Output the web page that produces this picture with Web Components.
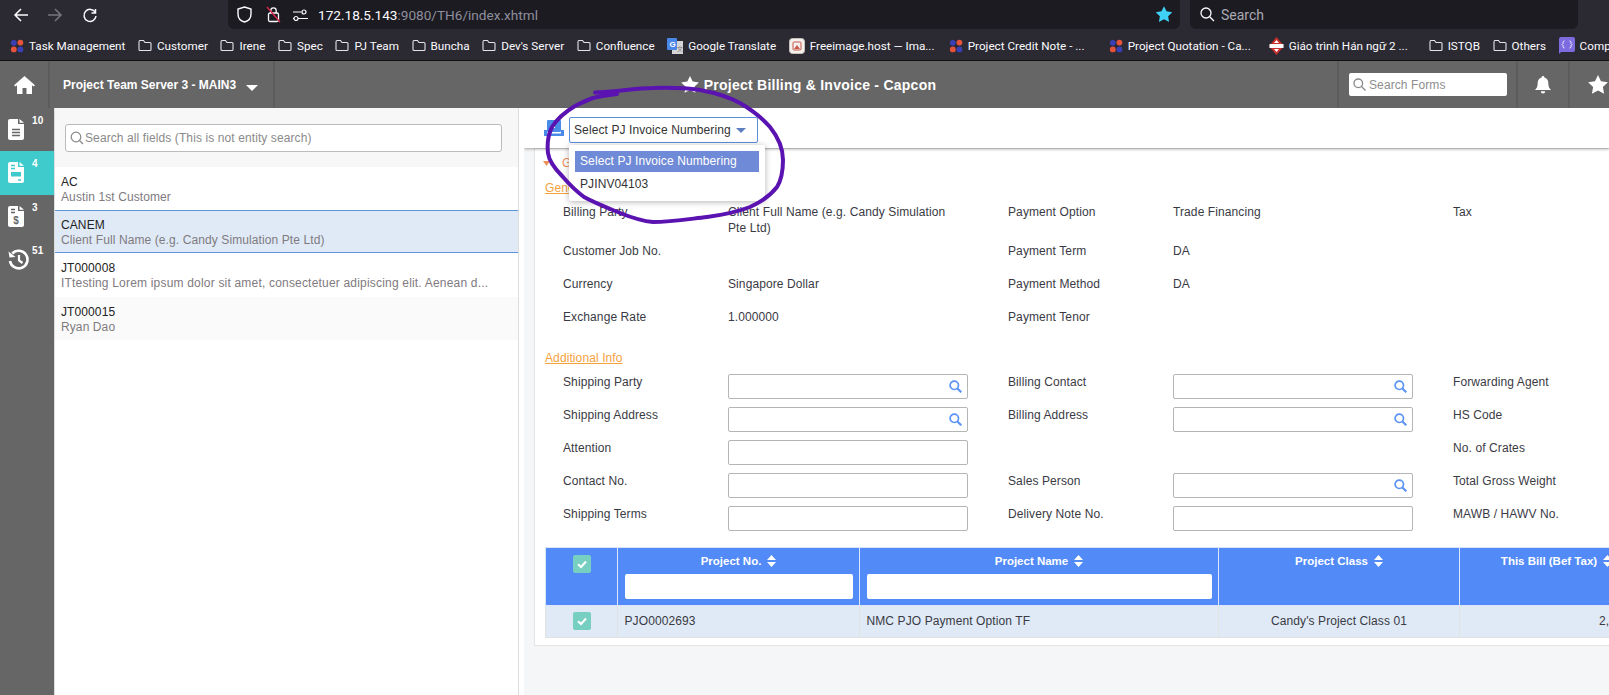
<!DOCTYPE html>
<html>
<head>
<meta charset="utf-8">
<title>Project Billing & Invoice</title>
<style>
  html, body { margin: 0; padding: 0; width: 1609px; height: 695px; overflow: hidden; background: #f4f6f8; }
  body { font-family: "Liberation Sans", Arial, sans-serif; font-size: 12px; color: #3a3a44; letter-spacing: .1px; }
</style>
</head>
<body>
<browser-bar></browser-bar>
<bookmark-bar>
  <book-mark kind="dots" style="margin-left:10px">Task Management</book-mark>
  <book-mark kind="folder">Customer</book-mark>
  <book-mark kind="folder">Irene</book-mark>
  <book-mark kind="folder">Spec</book-mark>
  <book-mark kind="folder">PJ Team</book-mark>
  <book-mark kind="folder">Buncha</book-mark>
  <book-mark kind="folder">Dev's Server</book-mark>
  <book-mark kind="folder">Confluence</book-mark>
  <book-mark kind="translate">Google Translate</book-mark>
  <book-mark kind="image" style="width:147.4px">Freeimage.host — Ima...</book-mark>
  <book-mark kind="dots" style="width:147.4px">Project Credit Note - ...</book-mark>
  <book-mark kind="dots" style="width:147.4px">Project Quotation - Ca...</book-mark>
  <book-mark kind="site" style="width:147.4px">Giáo trình Hán ngữ 2 ...</book-mark>
  <book-mark kind="folder">ISTQB</book-mark>
  <book-mark kind="folder">Others</book-mark>
  <book-mark kind="chat">Comp</book-mark>
</bookmark-bar>
<app-header></app-header>
<app-body>
  <side-rail slot="rail">
    <rail-item icon="doc" badge="10"></rail-item>
    <rail-item icon="form" badge="4" active></rail-item>
    <rail-item icon="bill" badge="3"></rail-item>
    <rail-item icon="history" badge="51"></rail-item>
  </side-rail>
  <entity-list slot="list">
    <entity-row code="AC" name="Austin 1st Customer"></entity-row>
    <entity-row code="CANEM" name="Client Full Name (e.g. Candy Simulation Pte Ltd)" selected></entity-row>
    <entity-row code="JT000008" name="ITtesting Lorem ipsum dolor sit amet, consectetuer adipiscing elit. Aenean d..." style="--name-spacing:.19px"></entity-row>
    <entity-row code="JT000015" name="Ryan Dao" shaded></entity-row>
  </entity-list>
  <invoice-toolbar slot="toolbar"></invoice-toolbar>
  <form-card slot="card">
    <section-title>General</section-title>
    <section-link style="margin-top:9px">General Info</section-link>
    <field-grid rows="39px 33px 33px 33px" style="margin-top:8px">
      <field-label>Billing Party</field-label><field-label>Client Full Name (e.g. Candy Simulation Pte Ltd)</field-label>
      <field-label>Payment Option</field-label><field-label>Trade Financing</field-label>
      <field-label>Tax</field-label>
      <field-label>Customer Job No.</field-label><span></span>
      <field-label>Payment Term</field-label><field-label>DA</field-label>
      <span></span>
      <field-label>Currency</field-label><field-label>Singapore Dollar</field-label>
      <field-label>Payment Method</field-label><field-label>DA</field-label>
      <span></span>
      <field-label>Exchange Rate</field-label><field-label>1.000000</field-label>
      <field-label>Payment Tenor</field-label><span></span>
      <span></span>
    </field-grid>
    <section-link style="margin-top:8px">Additional Info</section-link>
    <field-grid rows="33px 33px 33px 33px 33px" style="margin-top:8px">
      <field-label>Shipping Party</field-label><text-box search></text-box>
      <field-label>Billing Contact</field-label><text-box search></text-box>
      <field-label>Forwarding Agent</field-label>
      <field-label>Shipping Address</field-label><text-box search></text-box>
      <field-label>Billing Address</field-label><text-box search></text-box>
      <field-label>HS Code</field-label>
      <field-label>Attention</field-label><text-box></text-box>
      <span></span><span></span>
      <field-label>No. of Crates</field-label>
      <field-label>Contact No.</field-label><text-box></text-box>
      <field-label>Sales Person</field-label><text-box search></text-box>
      <field-label>Total Gross Weight</field-label>
      <field-label>Shipping Terms</field-label><text-box></text-box>
      <field-label>Delivery Note No.</field-label><text-box></text-box>
      <field-label>MAWB / HAWV No.</field-label>
    </field-grid>
    <project-table style="margin-top:8px"></project-table>
  </form-card>
</app-body>
<scribble-mark></scribble-mark>

<script>
const folderIcon = '<svg width="14" height="13" viewBox="0 0 14 13" fill="none" stroke="#e4e4e8" stroke-width="1.1"><path d="M1 3V10.5Q1 11.5 2 11.5H12Q13 11.5 13 10.5V4.5Q13 3.5 12 3.5H7L5.5 1.5H2Q1 1.5 1 3Z"/></svg>';
const dotsIcon = '<svg width="14" height="14" viewBox="0 0 14 14"><circle cx="3.8" cy="3.8" r="2.9" fill="#3b3fb5"/><circle cx="10.4" cy="3.6" r="2.9" fill="#e5533d"/><circle cx="3.8" cy="10.4" r="2.9" fill="#e5533d"/><circle cx="10.4" cy="10.4" r="2.9" fill="#3b3fb5"/></svg>';
const bookmarkIcons = {
  folder: folderIcon,
  dots: dotsIcon,
  translate: '<svg width="16" height="16" viewBox="0 0 16 16"><rect x="5" y="3" width="11" height="13" fill="#d5d5d5"/><rect x="0" y="0" width="10" height="12" rx="1" fill="#4a86e8"/><text x="2.4" y="9" font-size="8" font-weight="700" font-family="Liberation Sans" fill="#fff">G</text><text x="10" y="13" font-size="6" font-family="Noto Sans CJK SC" fill="#777">文</text></svg>',
  image: '<svg width="16" height="16" viewBox="0 0 16 16"><rect x="0.5" y="0.5" width="15" height="15" rx="3" fill="#f4f0ee" stroke="#c9c2bd"/><rect x="4" y="4" width="8" height="8" rx="1" fill="none" stroke="#c9584a"/><path d="M5 11L8 7L11 11Z" fill="#c9584a"/></svg>',
  site: '<svg width="15" height="18" viewBox="0 0 15 18"><path d="M7.5 0L15 9L7.5 18L0 9Z" fill="#c9302c"/><rect x="0.5" y="7" width="14" height="4" fill="#fff"/><path d="M7.5 3L10 6H5ZM7.5 15L5 12H10Z" fill="#fff"/></svg>',
  chat: '<svg width="16" height="17" viewBox="0 0 16 17"><path d="M2 0H14Q16 0 16 2V13Q16 15 14 15H2L0 17V2Q0 0 2 0Z" fill="#7d6be0"/><path d="M5.5 4Q4 4 4 5.5V6.5L3 7.5L4 8.5V9.5Q4 11 5.5 11M10.5 4Q12 4 12 5.5V6.5L13 7.5L12 8.5V9.5Q12 11 10.5 11" fill="none" stroke="#fff" stroke-width=".9"/></svg>'
};

class BrowserBar extends HTMLElement {
  constructor() {
    super();
    this.attachShadow({ mode: 'open' });
    this.shadowRoot.innerHTML = `
      <style>
        :host { display: flex; align-items: stretch; height: 29px; background: #2b2a33; font-family: Roboto, sans-serif; color: #fbfbfe; letter-spacing: 0; }
        .nav { width: 228px; display: flex; align-items: center; }
        .nav svg { display: block; }
        .url { width: 952px; background: #1c1b22; border-radius: 0 0 6px 6px; display: flex; align-items: center; position: relative; }
        .url .host { font-size: 13.6px; }
        .url .path { font-size: 13.6px; color: #8f8f9d; }
        .find { width: 388px; margin-left: 10px; background: #1c1b22; border-radius: 0 0 6px 6px; display: flex; align-items: center; padding-left: 10px; box-sizing: border-box; font-size: 14px; color: #a9a9b2; gap: 6px; }
      </style>
      <div class="nav">
        <svg style="margin-left:13px" width="16" height="16" viewBox="0 0 16 16" fill="none" stroke="#fbfbfe" stroke-width="1.5"><path d="M15 8H2M8 2L2 8L8 14"/></svg>
        <svg style="margin-left:18px" width="16" height="16" viewBox="0 0 16 16" fill="none" stroke="#77767e" stroke-width="1.5"><path d="M1 8H14M8 2L14 8L8 14"/></svg>
        <svg style="margin-left:19px" width="16" height="16" viewBox="0 0 16 16" fill="none" stroke="#fbfbfe" stroke-width="1.5"><path d="M13.5 2V6H9.5M13.3 5.5A6 6 0 1 0 14 9"/></svg>
      </div>
      <div class="url">
        <svg style="margin-left:9px" width="15" height="17" viewBox="0 0 15 17" fill="none" stroke="#fbfbfe" stroke-width="1.4"><path d="M7.5 1L14 3V8C14 12 11 15 7.5 16C4 15 1 12 1 8V3Z"/></svg>
        <svg style="margin-left:14px" width="15" height="17" viewBox="0 0 15 17" fill="none"><rect x="2.5" y="7" width="10" height="8.5" rx="1.5" stroke="#fbfbfe" stroke-width="1.3"/><path d="M4.8 7V4.5A2.7 2.7 0 0 1 10.2 4.5V7" stroke="#fbfbfe" stroke-width="1.3"/><path d="M1 1L14 16" stroke="#e22850" stroke-width="1.3"/></svg>
        <svg style="margin-left:12px" width="15" height="12" viewBox="0 0 15 12" fill="none" stroke="#fbfbfe" stroke-width="1.2"><circle cx="11" cy="3" r="2"/><path d="M0 3H8.5M0 9.5H1M5 9.5H15"/><circle cx="3" cy="9.5" r="2"/></svg>
        <span style="margin-left:10px" class="host">172.18.5.143</span><span class="path">:9080/TH6/index.xhtml</span>
        <svg style="position:absolute;left:927px;top:5px" width="18" height="18" viewBox="0 0 24 24" fill="#3ed0f5"><path d="M12 1.5L15.4 8.4L23 9.5L17.5 14.9L18.8 22.5L12 18.9L5.2 22.5L6.5 14.9L1 9.5L8.6 8.4Z"/></svg>
      </div>
      <div class="find">
        <svg width="15" height="15" viewBox="0 0 15 15" fill="none" stroke="#fbfbfe" stroke-width="1.3"><circle cx="6" cy="6" r="5"/><path d="M9.7 9.7L14 14"/></svg>
        <span>Search</span>
      </div>
    `;
  }
}

class BookmarkBar extends HTMLElement {
  constructor() {
    super();
    this.attachShadow({ mode: 'open' });
    this.shadowRoot.innerHTML = `
      <style>
        :host { display: flex; align-items: center; gap: 12.6px; height: 29px; padding-top: 2px; background: #2b2a33; border-bottom: 1px solid #111; overflow: hidden; font-family: Roboto, sans-serif; font-size: 11.7px; letter-spacing: 0; color: #fbfbfe; }
      </style>
      <slot></slot>
    `;
  }
}

class BookMark extends HTMLElement {
  constructor() {
    super();
    this.attachShadow({ mode: 'open' });
    this.shadowRoot.innerHTML = `
      <style>
        :host { display: inline-flex; flex: none; align-items: center; gap: 5px; white-space: nowrap; }
        svg { display: block; }
      </style>
      <span id="icon"></span><slot></slot>
    `;
  }
  connectedCallback() {
    this.shadowRoot.getElementById('icon').innerHTML = bookmarkIcons[this.getAttribute('kind')] || '';
  }
}

class AppHeader extends HTMLElement {
  constructor() {
    super();
    this.attachShadow({ mode: 'open' });
    this.shadowRoot.innerHTML = `
      <style>
        :host { display: flex; height: 47px; background: #666; color: #fff; position: relative; }
        .cell { display: flex; align-items: center; box-sizing: border-box; border-right: 2px solid #5c5c5c; flex: none; }
        .home { width: 50px; justify-content: center; }
        .server { width: 225px; padding-left: 13px; font-weight: 700; font-size: 12px; letter-spacing: 0; }
        .caret { margin-left: 10px; margin-top: 6px; }
        .title { flex: 1; justify-content: center; font-weight: 700; font-size: 14px; letter-spacing: .25px; gap: 5px; border: 0; padding-left: 5px; }
        .forms { width: 181px; border-left: 2px solid #5c5c5c; padding-left: 10px; }
        .box { width: 158px; height: 23px; background: #fff; border-radius: 2px; display: flex; align-items: center; gap: 3px; padding-left: 4px; box-sizing: border-box; color: #8e8e8e; font-size: 12px; font-weight: 400; }
        .bell { width: 52px; justify-content: center; }
        .star { width: 39px; padding-left: 18px; border: 0; }
      </style>
      <div class="cell home"><svg width="21" height="18" viewBox="0 0 21 18" fill="#fff"><path d="M10.5 0L21 9.3L19.6 10.6L18 9.3V18H12.5V12H8.5V18H3V9.3L1.4 10.6L0 9.3Z"/></svg></div>
      <div class="cell server">Project Team Server 3 - MAIN3
        <svg class="caret" width="12" height="7" viewBox="0 0 12 7" fill="#fff"><path d="M0 1H12L6 7Z"/></svg></div>
      <div class="cell title">
        <svg width="18" height="17" viewBox="0 0 24 23" fill="#fff"><path d="M12 0L15.6 7.6L24 8.7L17.9 14.5L19.4 22.8L12 18.8L4.6 22.8L6.1 14.5L0 8.7L8.4 7.6Z"/></svg>
        <span>Project Billing &amp; Invoice - Capcon</span>
      </div>
      <div class="cell forms"><div class="box">
        <svg width="13" height="13" viewBox="0 0 13 13" fill="none" stroke="#888" stroke-width="1.3"><circle cx="5.3" cy="5.3" r="4.3"/><path d="M8.5 8.5L12.5 12.5"/></svg>
        <span>Search Forms</span></div></div>
      <div class="cell bell"><svg width="16" height="18" viewBox="0 0 16 18" fill="#fff"><path d="M8 0A1.3 1.3 0 0 1 9.3 1.5C12 2 13.3 4.3 13.3 7C13.3 11 14.5 12.5 16 14H0C1.5 12.5 2.7 11 2.7 7C2.7 4.3 4 2 6.7 1.5A1.3 1.3 0 0 1 8 0ZM5.8 15.2H10.2A2.2 2.2 0 0 1 5.8 15.2Z"/></svg></div>
      <div class="cell star"><svg width="20" height="19" viewBox="0 0 24 23" fill="#fff"><path d="M12 0L15.6 7.6L24 8.7L17.9 14.5L19.4 22.8L12 18.8L4.6 22.8L6.1 14.5L0 8.7L8.4 7.6Z"/></svg></div>
    `;
  }
}

class AppBody extends HTMLElement {
  constructor() {
    super();
    this.attachShadow({ mode: 'open' });
    this.shadowRoot.innerHTML = `
      <style>
        :host { display: flex; height: 587px; overflow: hidden; }
        main { flex: 1; min-width: 0; overflow: hidden; position: relative; background: #f4f6f8; border-left: 5px solid #fff; }
      </style>
      <slot name="rail"></slot>
      <slot name="list"></slot>
      <main>
        <slot name="toolbar"></slot>
        <slot name="card"></slot>
      </main>
    `;
  }
}

class SideRail extends HTMLElement {
  constructor() {
    super();
    this.attachShadow({ mode: 'open' });
    this.shadowRoot.innerHTML = `
      <style>
        :host { display: block; width: 54px; flex: none; background: #666; }
      </style>
      <slot></slot>
    `;
  }
}

const railIcons = {
  doc: '<path d="M2 0H10V5H16V19Q16 21 14 21H2Q0 21 0 19V2Q0 0 2 0ZM11.5 0L16 3.8H11.5Z" fill="#fff"/><path d="M4 10.5H12M4 13.5H12M4 16.5H12" stroke="#666" stroke-width="1.4"/>',
  form: '<path d="M2 0H10V5H16V19Q16 21 14 21H2Q0 21 0 19V2Q0 0 2 0ZM11.5 0L16 3.8H11.5Z" fill="#fff"/><path d="M3 3.5H7M3 6.5H7M10 18H13" stroke="#3fcbcb" stroke-width="1.3"/><rect x="3" y="10" width="10" height="4.5" fill="#3fcbcb"/>',
  bill: '<path d="M2 0H10V5H16V19Q16 21 14 21H2Q0 21 0 19V2Q0 0 2 0ZM11.5 0L16 3.8H11.5Z" fill="#fff"/><path d="M3 3.5H7M3 6.5H7" stroke="#666" stroke-width="1.3"/><text x="8" y="18" text-anchor="middle" font-size="10" font-weight="700" font-family="Liberation Sans" fill="#666">$</text>'
};

class RailItem extends HTMLElement {
  constructor() {
    super();
    this.attachShadow({ mode: 'open' });
    this.shadowRoot.innerHTML = `
      <style>
        :host { display: block; height: 43.3px; box-sizing: border-box; padding: 11px 0 0 8px; position: relative; color: #fff; }
        :host([active]) { background: #3fcbcb; }
        svg { display: block; }
        b { position: absolute; left: 32px; top: 7px; font-size: 10px; line-height: 12px; }
      </style>
      <span id="icon"></span><b id="badge"></b>
    `;
  }
  connectedCallback() {
    const name = this.getAttribute('icon');
    this.shadowRoot.getElementById('badge').textContent = this.getAttribute('badge');
    this.shadowRoot.getElementById('icon').innerHTML = name === 'history'
      ? '<svg width="21" height="21" viewBox="0 0 21 21" fill="none" stroke="#fff" stroke-width="2.6"><path d="M4.3 4.5A8.8 8.8 0 1 1 2 12"/><path d="M0.5 2.5L1.5 8.5L7.5 8" fill="#fff" stroke="none"/><path d="M11 6V11.5L14.5 14" stroke-width="2.2"/></svg>'
      : `<svg width="16" height="21" viewBox="0 0 16 21">${railIcons[name]}</svg>`;
  }
}

class EntityList extends HTMLElement {
  constructor() {
    super();
    this.attachShadow({ mode: 'open' });
    this.shadowRoot.innerHTML = `
      <style>
        :host { display: block; width: 465px; flex: none; box-sizing: border-box; background: #fff; border-left: 1px solid #ddd; border-right: 1px solid #ddd; }
        .head { height: 59px; background: #f7f7f7; box-sizing: border-box; padding: 16px 16px 0 10px; }
        .search { height: 28px; background: #fff; border: 1px solid #bbb; border-radius: 3px; box-sizing: border-box; display: flex; align-items: center; gap: 1px; padding-left: 4px; color: #8a8a8a; }
      </style>
      <div class="head"><div class="search">
        <svg width="14" height="14" viewBox="0 0 14 14" fill="none" stroke="#888" stroke-width="1.2"><circle cx="6" cy="6" r="4.8"/><path d="M9.5 9.5L13 13"/></svg>
        <span>Search all fields (This is not entity search)</span>
      </div></div>
      <slot></slot>
    `;
  }
}

class EntityRow extends HTMLElement {
  constructor() {
    super();
    this.attachShadow({ mode: 'open' });
    this.shadowRoot.innerHTML = `
      <style>
        :host { display: block; height: 43.2px; box-sizing: border-box; padding: 8px 6px 0 6px; line-height: 15px; background: #fff; }
        :host([selected]) { background: #dfeaf6; border-top: 1px solid #5f93e0; border-bottom: 1px solid #5f93e0; padding-top: 7px; }
        :host([shaded]) { background: #fafafa; }
        .code { color: #222; }
        .name { color: #807a80; white-space: nowrap; overflow: hidden; letter-spacing: var(--name-spacing, .1px); }
      </style>
      <div class="code"></div><div class="name"></div>
    `;
  }
  connectedCallback() {
    this.shadowRoot.querySelector('.code').textContent = this.getAttribute('code');
    this.shadowRoot.querySelector('.name').textContent = this.getAttribute('name');
  }
}

class InvoiceToolbar extends HTMLElement {
  constructor() {
    super();
    this.attachShadow({ mode: 'open' });
    this.shadowRoot.innerHTML = `
      <style>
        :host { display: flex; align-items: center; height: 40px; background: #fff; padding-left: 20px; position: relative; z-index: 2; box-shadow: 0 1px 3px rgba(0,0,0,.35); }
        .select { width: 189px; height: 26px; margin-left: 5px; margin-top: 4px; box-sizing: border-box; border: 1px solid #5b8fd9; border-radius: 2px; background: #fff; display: flex; align-items: center; justify-content: space-between; padding: 0 11px 0 4px; color: #333; }
        .menu { position: absolute; left: 45px; top: 37px; width: 196px; height: 56px; box-sizing: border-box; background: #fff; box-shadow: 0 1px 6px rgba(0,0,0,.3); border-radius: 2px; padding: 6px; }
        .opt { height: 21px; line-height: 21px; padding-left: 5px; color: #333; }
        .opt.on { background: #6f8ad6; color: #fff; }
        .opt.off { line-height: 24px; }
        svg { display: block; }
      </style>
      <svg width="20" height="16" viewBox="0 0 20 16"><path d="M0 10H3V13.5H17V10H20V16H0Z" fill="#4a8bea"/><rect x="3" y="0" width="14" height="12" rx="1" fill="#4a8bea"/><rect x="9" y="6" width="2" height="2" fill="#fff"/></svg>
      <div class="select"><span>Select PJ Invoice Numbering</span>
        <svg width="10" height="5" viewBox="0 0 10 5" fill="#5d7fbf"><path d="M0 0H10L5 5Z"/></svg></div>
      <div class="menu">
        <div class="opt on">Select PJ Invoice Numbering</div>
        <div class="opt off">PJINV04103</div>
      </div>
    `;
  }
}

class FormCard extends HTMLElement {
  constructor() {
    super();
    this.attachShadow({ mode: 'open' });
    this.shadowRoot.innerHTML = `
      <style>
        :host { display: block; width: 1240px; height: 498px; margin-left: 10px; box-sizing: border-box; background: #fff; border: 1px solid #e4e4e4; padding: 6px 0 0 10px; }
      </style>
      <slot></slot>
    `;
  }
}

class SectionTitle extends HTMLElement {
  constructor() {
    super();
    this.attachShadow({ mode: 'open' });
    this.shadowRoot.innerHTML = `
      <style>
        :host { display: flex; align-items: center; gap: 12px; height: 16px; color: #ee8f5a; font-size: 12px; line-height: 16px; margin-left: -2px; }
      </style>
      <svg width="7" height="5" viewBox="0 0 7 5" fill="#ee8f5a"><path d="M0 0H7L3.5 5Z"/></svg><slot></slot>
    `;
  }
}

class SectionLink extends HTMLElement {
  constructor() {
    super();
    this.attachShadow({ mode: 'open' });
    this.shadowRoot.innerHTML = `
      <style>
        :host { display: block; height: 16px; line-height: 16px; color: #f5a13c; text-decoration: underline; }
      </style>
      <slot></slot>
    `;
  }
}

class FieldGrid extends HTMLElement {
  constructor() {
    super();
    this.attachShadow({ mode: 'open' });
    this.shadowRoot.innerHTML = `
      <style>
        :host { display: grid; grid-template-columns: 165px 280px 165px 280px 1fr; margin-left: 18px; }
      </style>
      <slot></slot>
    `;
  }
  connectedCallback() {
    this.style.gridTemplateRows = this.getAttribute('rows');
  }
}

class FieldLabel extends HTMLElement {
  constructor() {
    super();
    this.attachShadow({ mode: 'open' });
    this.shadowRoot.innerHTML = `
      <style>
        :host { display: block; line-height: 16px; max-width: 232px; color: #3a3a44; }
      </style>
      <slot></slot>
    `;
  }
}

class TextBox extends HTMLElement {
  constructor() {
    super();
    this.attachShadow({ mode: 'open' });
    this.shadowRoot.innerHTML = `
      <style>
        :host { display: flex; align-items: center; justify-content: flex-end; width: 240px; height: 25px; box-sizing: border-box; border: 1px solid #b5b5b5; border-radius: 2px; background: #fff; padding-right: 5px; }
        svg { display: block; }
      </style>
      <span id="icon"></span>
    `;
  }
  connectedCallback() {
    if (this.hasAttribute('search')) {
      this.shadowRoot.getElementById('icon').innerHTML = '<svg width="13" height="13" viewBox="0 0 13 13" fill="none" stroke="#5b93f5" stroke-width="1.7"><circle cx="5.3" cy="5.3" r="4.2"/><path d="M8.4 8.4L12.3 12.3" stroke-width="2.1"/></svg>';
    }
  }
}

class ProjectTable extends HTMLElement {
  constructor() {
    super();
    this.attachShadow({ mode: 'open' });
    const check = '<svg class="check" width="18" height="18" viewBox="0 0 18 18"><rect width="18" height="18" rx="2" fill="#76cfc0"/><path d="M5 9.2L8 12L13 6.5" fill="none" stroke="#fff" stroke-width="2"/></svg>';
    const sort = '<svg class="sort" width="9" height="12" viewBox="0 0 9 12" fill="#fff"><path d="M4.5 0L9 5H0ZM4.5 12L0 7H9Z"/></svg>';
    this.shadowRoot.innerHTML = `
      <style>
        :host { display: block; }
        table { border-collapse: collapse; table-layout: fixed; width: 1108px; font-size: 12px; }
        th, td { border: 1px solid #e2e2e2; box-sizing: border-box; padding: 0 6.5px; vertical-align: top; }
        th { background: #528bf8; color: #fff; height: 58px; text-align: center; font-weight: 700; font-size: 11.5px; letter-spacing: 0; border-color: #dbe6fb; padding-top: 7px; }
        td { background: #dfeaf6; height: 32px; color: #3a3a44; line-height: 30px; }
        .check { display: block; margin: 0 auto; }
        .sort { vertical-align: -2px; margin-left: 6px; }
        input { display: block; width: 100%; height: 25px; box-sizing: border-box; border: 0; border-radius: 2px; background: #fff; margin-top: 7px; }
        .c { text-align: center; }
        .r { text-align: right; }
      </style>
      <table>
        <colgroup><col style="width:72px"><col style="width:242px"><col style="width:359px"><col style="width:241px"><col style="width:194px"></colgroup>
        <tr>
          <th>${check}</th>
          <th>Project No.${sort}<input></th>
          <th>Project Name${sort}<input></th>
          <th>Project Class${sort}</th>
          <th>This Bill (Bef Tax)${sort}</th>
        </tr>
        <tr>
          <td style="padding-top:6px">${check}</td>
          <td>PJO0002693</td>
          <td>NMC PJO Payment Option TF</td>
          <td class="c">Candy's Project Class 01</td>
          <td class="r">2,000.00</td>
        </tr>
      </table>
    `;
  }
}

class ScribbleMark extends HTMLElement {
  constructor() {
    super();
    this.attachShadow({ mode: 'open' });
    this.shadowRoot.innerHTML = `
      <style>
        :host { position: absolute; left: 0; top: 0; width: 1609px; height: 695px; pointer-events: none; z-index: 10; }
      </style>
      <svg width="1609" height="695" fill="none" stroke="#5a12b0" stroke-width="4" stroke-linecap="round" stroke-linejoin="round">
        <path d="M595 92.5C615 92 635 88 653 88C672 87.5 687 88 700 90C716 93 729 97 740 103C752 110 762 118 770 127C778 137 783 148 783 160C783 170 782 179 777 187C770 196 761 202 750 207C737 212 722 215 707 217C689 219 671 222 653 222C641 221 630 217 620 213C608 208 595 203 584 197C576 191 569 184 563 177C556 170 549 162 548 153C547 144 548 135 552 127C557 119 565 112 575 106C581 103 587 100 593 98C600 96 608 95 617 94"/>
      </svg>
    `;
  }
}

customElements.define('browser-bar', BrowserBar);
customElements.define('bookmark-bar', BookmarkBar);
customElements.define('book-mark', BookMark);
customElements.define('app-header', AppHeader);
customElements.define('app-body', AppBody);
customElements.define('side-rail', SideRail);
customElements.define('rail-item', RailItem);
customElements.define('entity-list', EntityList);
customElements.define('entity-row', EntityRow);
customElements.define('invoice-toolbar', InvoiceToolbar);
customElements.define('form-card', FormCard);
customElements.define('section-title', SectionTitle);
customElements.define('section-link', SectionLink);
customElements.define('field-grid', FieldGrid);
customElements.define('field-label', FieldLabel);
customElements.define('text-box', TextBox);
customElements.define('project-table', ProjectTable);
customElements.define('scribble-mark', ScribbleMark);
</script>
</body>
</html>
